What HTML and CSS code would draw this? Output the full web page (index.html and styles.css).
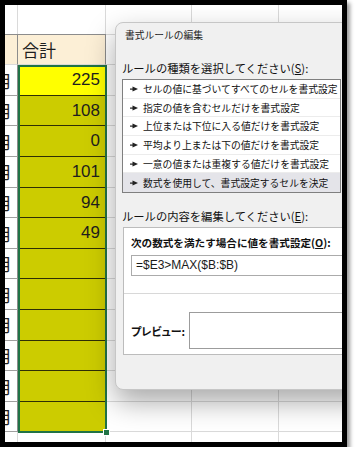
FILE: index.html
```html
<!DOCTYPE html>
<html lang="ja">
<head>
    <meta charset="UTF-8">
    <meta name="viewport" content="width=device-width, initial-scale=1.0">
    <title>書式ルールの編集</title>
    <link rel="stylesheet" href="styles.css">
</head>
<body>
    <div class="frame">
        <div class="sheet">
            <div class="cell"></div><div class="cell"></div><div class="cell"></div><div class="cell"></div><div class="cell"></div>

            <div class="cell head"></div><div class="cell head label">合計</div><div class="cell"></div><div class="cell"></div><div class="cell"></div>

            <div class="cell month"><span>月</span></div><div class="cell num top">225</div><div class="cell"></div><div class="cell"></div><div class="cell"></div>
            <div class="cell month"><span>月</span></div><div class="cell num">108</div><div class="cell"></div><div class="cell"></div><div class="cell"></div>
            <div class="cell month"><span>月</span></div><div class="cell num">0</div><div class="cell"></div><div class="cell"></div><div class="cell"></div>
            <div class="cell month"><span>月</span></div><div class="cell num">101</div><div class="cell"></div><div class="cell"></div><div class="cell"></div>
            <div class="cell month"><span>月</span></div><div class="cell num">94</div><div class="cell"></div><div class="cell"></div><div class="cell"></div>
            <div class="cell month"><span>月</span></div><div class="cell num">49</div><div class="cell"></div><div class="cell"></div><div class="cell"></div>
            <div class="cell month"><span>月</span></div><div class="cell num"></div><div class="cell"></div><div class="cell"></div><div class="cell"></div>
            <div class="cell month"><span>月</span></div><div class="cell num"></div><div class="cell"></div><div class="cell"></div><div class="cell"></div>
            <div class="cell month"><span>月</span></div><div class="cell num"></div><div class="cell"></div><div class="cell"></div><div class="cell"></div>
            <div class="cell month"><span>月</span></div><div class="cell num"></div><div class="cell"></div><div class="cell"></div><div class="cell"></div>
            <div class="cell month"><span>月</span></div><div class="cell num"></div><div class="cell"></div><div class="cell"></div><div class="cell"></div>
            <div class="cell month"><span>月</span></div><div class="cell num"></div><div class="cell"></div><div class="cell"></div><div class="cell"></div>

            <div class="cell"></div><div class="cell"></div><div class="cell"></div><div class="cell"></div><div class="cell"></div>
        </div>

        <div class="selection"><span class="handle"></span></div>

        <div class="dialog">
            <div class="dialog-title">書式ルールの編集</div>

            <div class="field-label">ルールの種類を選択してください(<u>S</u>):</div>
            <ul class="rule-list">
                <li><svg class="pointer" viewBox="0 0 8 6"><rect x="0" y="2.5" width="3" height="1.2"/><polygon points="2.5,0.6 8,3 2.5,5.4"/></svg>セルの値に基づいてすべてのセルを書式設定</li>
                <li><svg class="pointer" viewBox="0 0 8 6"><rect x="0" y="2.5" width="3" height="1.2"/><polygon points="2.5,0.6 8,3 2.5,5.4"/></svg>指定の値を含むセルだけを書式設定</li>
                <li><svg class="pointer" viewBox="0 0 8 6"><rect x="0" y="2.5" width="3" height="1.2"/><polygon points="2.5,0.6 8,3 2.5,5.4"/></svg>上位または下位に入る値だけを書式設定</li>
                <li><svg class="pointer" viewBox="0 0 8 6"><rect x="0" y="2.5" width="3" height="1.2"/><polygon points="2.5,0.6 8,3 2.5,5.4"/></svg>平均より上または下の値だけを書式設定</li>
                <li><svg class="pointer" viewBox="0 0 8 6"><rect x="0" y="2.5" width="3" height="1.2"/><polygon points="2.5,0.6 8,3 2.5,5.4"/></svg>一意の値または重複する値だけを書式設定</li>
                <li class="selected"><svg class="pointer" viewBox="0 0 8 6"><rect x="0" y="2.5" width="3" height="1.2"/><polygon points="2.5,0.6 8,3 2.5,5.4"/></svg>数式を使用して、書式設定するセルを決定</li>
            </ul>

            <div class="field-label second">ルールの内容を編集してください(<u>E</u>):</div>
            <div class="rule-box">
                <div class="formula-label">次の数式を満たす場合に値を書式設定(<u>O</u>):</div>
                <div class="formula-input">=$E3&gt;MAX($B:$B)</div>
                <div class="divider"></div>
                <div class="preview-row">
                    <span class="preview-label">プレビュー:</span>
                    <div class="preview-box"></div>
                </div>
            </div>
        </div>
    </div>
</body>
</html>
```

FILE: styles.css
```css
body {
    margin: 0;
    background: #ffffff;
    font-family: "Noto Sans CJK JP", "Liberation Sans", sans-serif;
}
.frame {
    position: relative;
    width: 347px;
    height: 447px;
    box-sizing: border-box;
    border: 5px solid #000000;
    overflow: hidden;
    background: #ffffff;
    box-shadow: 3px 3px 4px rgba(0, 0, 0, 0.4);
}
.sheet {
    display: grid;
    grid-template-columns: 13px 88px 86px 87px 87px;
    grid-template-rows: 30px 30.3px repeat(13, 30.6px);
}
.cell {
    box-sizing: border-box;
    border-right: 1px solid #dadada;
    border-bottom: 1px solid #dadada;
    font-size: 17px;
    color: #1e1e1e;
    overflow: hidden;
}
.head {
    background: #fcefd6;
    border-top: 1px solid #8c8c8c;
    border-right-color: #8c8c8c;
    margin-top: -1px;
}
.label {
    padding: 3px 0 0 4px;
    line-height: 24px;
}
.month {
    display: flex;
    justify-content: flex-end;
    align-items: center;
    padding-right: 5px;
    border-bottom-color: #a0a0a0;
    border-right-color: #8c8c8c;
}
.month span {
    flex-shrink: 0;
}
.num {
    background: #cccc00;
    border-bottom: 1px solid #2e2e05;
    text-align: right;
    padding-right: 5px;
    line-height: 30px;
    font-family: "Liberation Sans", sans-serif;
}
.num.top {
    background: #ffff00;
}
.selection {
    position: absolute;
    left: 13px;
    top: 60px;
    width: 89px;
    height: 368px;
    box-sizing: border-box;
    border: 2px solid #217346;
}
.handle {
    position: absolute;
    right: -5px;
    bottom: -5px;
    width: 5px;
    height: 5px;
    background: #217346;
    border: 1px solid #ffffff;
}
.dialog {
    position: absolute;
    left: 110px;
    top: 17px;
    width: 260px;
    box-sizing: border-box;
    padding: 0 0 34px 6px;
    background: #f0f0f0;
    border: 1px solid #c6c6c6;
    border-radius: 8px;
    box-shadow: 0 12px 28px rgba(0, 0, 0, 0.34);
    color: #111111;
}
.dialog-title {
    height: 25px;
    line-height: 25px;
    padding-left: 3px;
    font-size: 9.75px;
    color: #222222;
}
.field-label {
    margin-top: 10px;
    line-height: 20px;
    font-size: 11.3px;
}
.field-label.second {
    margin-top: 13px;
}
.rule-list {
    list-style: none;
    margin: 1px 0 0 0;
    padding: 0;
    width: 219px;
    box-sizing: border-box;
    background: #ffffff;
    border: 1px solid #7f7f7f;
}
.rule-list li {
    display: flex;
    align-items: center;
    height: 18.7px;
    box-sizing: border-box;
    padding-left: 7px;
    border-bottom: 1px solid #ececec;
    font-size: 9.8px;
    white-space: nowrap;
}
.rule-list li:last-child {
    border-bottom: none;
}
.rule-list li.selected {
    background: #e4e4e9;
}
.pointer {
    flex-shrink: 0;
    width: 8px;
    height: 6px;
    margin-right: 5px;
    fill: #222222;
}
.rule-box {
    margin: 1px 0 0 1px;
    width: 240px;
    box-sizing: border-box;
    padding: 5px 0 5px 7px;
    background: #ffffff;
    border: 1px solid #bcbcbc;
}
.formula-label {
    line-height: 20px;
    font-size: 10.6px;
    font-weight: bold;
    white-space: nowrap;
}
.formula-input {
    margin-top: 2px;
    height: 21px;
    box-sizing: border-box;
    padding-left: 4px;
    line-height: 19px;
    border: 1px solid #ababab;
    font-family: "Liberation Sans", sans-serif;
    font-size: 12px;
    color: #1a1a1a;
}
.divider {
    margin: 17px 0 0 -7px;
    border-top: 1px solid #d8d8d8;
}
.preview-row {
    display: flex;
    align-items: center;
    margin-top: 18px;
}
.preview-label {
    width: 58px;
    font-size: 11px;
    font-weight: bold;
    font-feature-settings: "palt";
}
.preview-box {
    flex: 1;
    height: 37px;
    box-sizing: border-box;
    background: #ffffff;
    border: 1px solid #9c9c9c;
}
```
